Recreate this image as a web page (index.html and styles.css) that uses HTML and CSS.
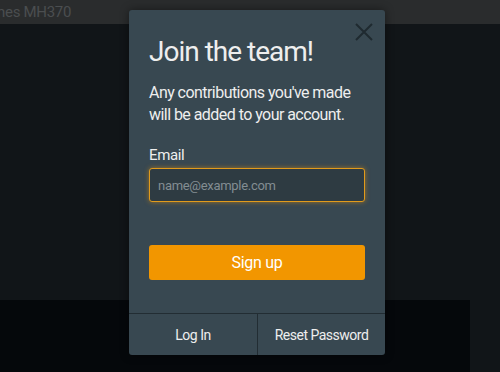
FILE: index.html
```html
<!DOCTYPE html>
<html lang="en">

<head>
  <meta charset="UTF-8">
  <title>Join the team</title>
  <meta name="viewport" content="width=device-width, initial-scale=1.0">
  <link rel="stylesheet" href="styles.css">
</head>

<body>
  <header class="topbar">
    <span class="topbar__title">nes MH370</span>
  </header>

  <main class="stage"></main>

  <div class="floor">
    <div class="floor__left"></div>
    <div class="floor__right"></div>
  </div>

  <!-- SIGN UP MODAL -->
  <div class="modal">
    <button class="modal__close" type="button" aria-label="Close">
      <svg class="icon" viewBox="0 0 18 18">
        <path d="M1 1L17 17M17 1L1 17"></path>
      </svg>
    </button>

    <div class="modal__body">
      <h1 class="modal__title">Join the team!</h1>
      <p class="modal__text">Any contributions you've made will be added to your account.</p>

      <form class="form">
        <label class="form__label" for="signup__email">Email</label>
        <input id="signup__email" class="form__input" type="email" placeholder="name@example.com">
        <button class="form__submit" type="submit">Sign up</button>
      </form>
    </div>

    <footer class="modal__footer">
      <a class="modal__link" href="#">Log In</a>
      <a class="modal__link" href="#">Reset Password</a>
    </footer>
  </div>
</body>

</html>
```

FILE: styles.css
```css
:root {
  --fontFamily: Roboto, "Liberation Sans", sans-serif;
  --pageBgColor: #111518;
  --topbarBgColor: #2a2c2d;
  --floorBgColor: #05080b;
  --modalBgColor: #384851;
  --modalLineColor: #222d33;
  --textColor: #eeeeee;
  --mutedColor: #838d92;
  --inputBgColor: #2e3b42;
  --accentColor: #f29600;
}

* {
  box-sizing: border-box;
}

body {
  margin: 0;
  height: 372px;
  overflow: hidden;
  background-color: var(--pageBgColor);
  font-family: var(--fontFamily);
  color: var(--textColor);
}

.topbar {
  height: 24px;
  background-color: var(--topbarBgColor);
  display: flex;
  align-items: center;
}

.topbar__title {
  margin-left: -3px;
  font-size: 15px;
  letter-spacing: -0.3px;
  color: #4b4e50;
}

.stage {
  height: 276px;
}

.floor {
  display: flex;
  height: 72px;
}

.floor__left {
  width: 470px;
  background-color: var(--floorBgColor);
}

.floor__right {
  flex: 1;
}

.modal {
  position: absolute;
  top: 10px;
  left: 129px;
  width: 256px;
  height: 345px;
  background-color: var(--modalBgColor);
  border-radius: 3px;
  box-shadow: 0 0 10px rgba(0, 0, 0, 0.45);
  display: flex;
  flex-direction: column;
}

.modal__close {
  position: absolute;
  top: 13px;
  right: 12px;
  width: 18px;
  height: 18px;
  padding: 0;
  border: 0;
  background: none;
  cursor: pointer;
}

.icon {
  display: block;
  width: 18px;
  height: 18px;
  stroke: #1f2a30;
  stroke-width: 2;
  fill: none;
}

.modal__body {
  flex: 1;
  padding: 22px 20px 0;
}

.modal__title {
  margin: 0;
  font-size: 28px;
  font-weight: 400;
  letter-spacing: -1px;
  line-height: 40px;
}

.modal__text {
  margin: 10px 0 0;
  font-size: 16px;
  letter-spacing: -0.55px;
  line-height: 22px;
}

.form {
  display: flex;
  flex-direction: column;
  margin-top: 19px;
}

.form__label {
  font-size: 15px;
  letter-spacing: -0.4px;
  line-height: 20px;
}

.form__input {
  margin-top: 3px;
  height: 34px;
  padding: 0 8px;
  border: 1px solid #e19b1c;
  border-radius: 3px;
  background-color: var(--inputBgColor);
  box-shadow: 0 0 5px rgba(242, 150, 0, 0.55);
  color: var(--textColor);
  font: inherit;
  font-size: 13px;
  letter-spacing: -0.3px;
  outline: 0;
}

.form__input::placeholder {
  color: var(--mutedColor);
}

.form__submit {
  margin-top: 43px;
  height: 35px;
  border: 0;
  border-radius: 3px;
  background-color: var(--accentColor);
  color: #fff;
  font: inherit;
  font-size: 16px;
  letter-spacing: -0.3px;
  cursor: pointer;
}

.modal__footer {
  display: grid;
  grid-template-columns: 128px 1fr;
  height: 42px;
  border-top: 1px solid var(--modalLineColor);
}

.modal__link {
  display: flex;
  align-items: center;
  justify-content: center;
  color: var(--textColor);
  font-size: 14px;
  letter-spacing: -0.5px;
  text-decoration: none;
}

.modal__link + .modal__link {
  border-left: 1px solid var(--modalLineColor);
}
```
